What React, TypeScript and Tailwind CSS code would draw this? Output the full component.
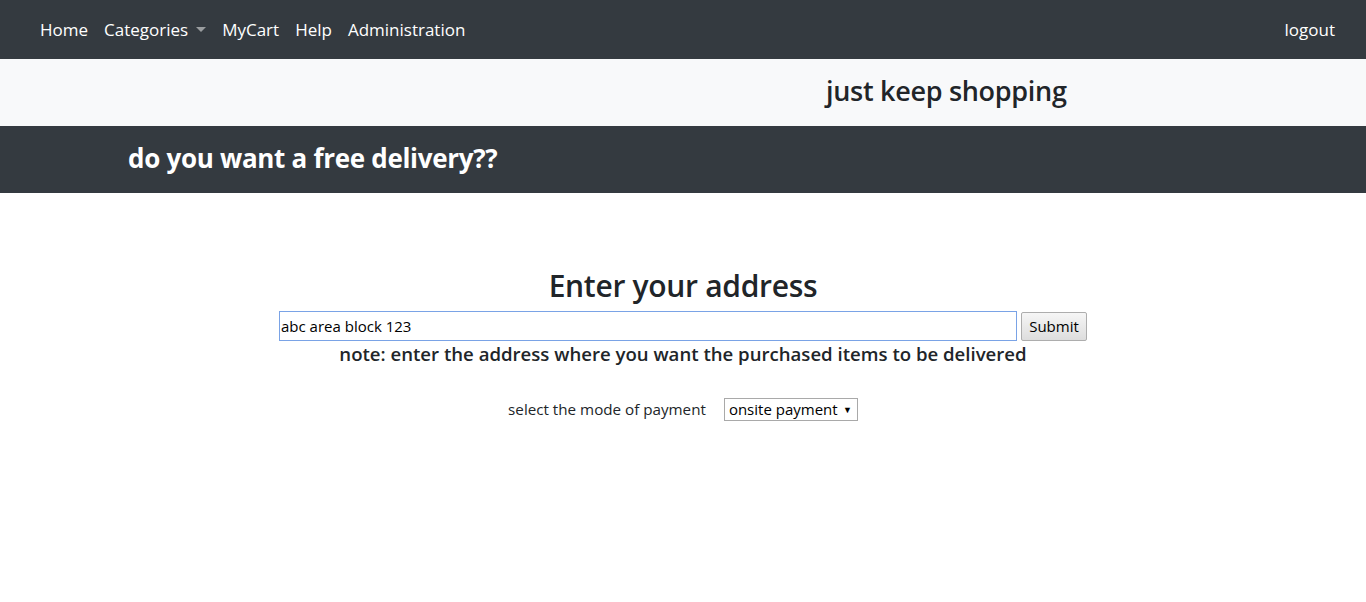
import React from 'react';

const font = { fontFamily: '"Open Sans", "Noto Sans", sans-serif' };

const NavLink: React.FC<{ label: string; caret?: boolean }> = ({ label, caret }) => (
  <a className="flex items-center px-2 py-2 text-white text-[17px] leading-6 cursor-pointer">
    {label}
    {caret && (
      <span className="ml-[8px] inline-block w-0 h-0 border-l-[5px] border-r-[5px] border-t-[5px] border-l-transparent border-r-transparent border-t-[#9a9da0]" />
    )}
  </a>
);

export default function App() {
  return (
    <div className="min-h-screen bg-white text-[#212529] font-['Open_Sans','Noto_Sans',sans-serif]">
      <nav className="h-[59px] bg-[#343a40] flex items-center justify-between pl-[32px] pr-[23px]">
        <div className="flex items-center">
          <NavLink label="Home" />
          <NavLink label="Categories" caret />
          <NavLink label="MyCart" />
          <NavLink label="Help" />
          <NavLink label="Administration" />
        </div>
        <NavLink label="logout" />
      </nav>

      <div className="h-[67px] bg-[#f8f9fa] flex items-center pl-[826px] pb-[4px]">
        <h2 className="text-[27px] font-semibold leading-none tracking-[-0.3px]">just keep shopping</h2>
      </div>

      <div className="h-[67px] bg-[#343a40] flex items-center pl-[128px] pb-[4px]">
        <h2 className="text-[26px] font-bold text-white leading-none tracking-[-0.3px]">do you want a free delivery??</h2>
      </div>

      <div className="flex flex-col items-center pt-[74px]">
        <h1 className="text-[30px] font-semibold leading-[38px] tracking-[-0.3px]">Enter your address</h1>
        <div className="flex items-center gap-[4px] mt-[6px]">
          <input
            defaultValue="abc area block 123"
            className="w-[738px] h-[30px] border border-[#7aa3e6] outline-none px-[1px] text-[15px] text-black"
            style={font}
          />
          <button className="h-[29px] w-[66px] border border-[#adadad] rounded-[2px] bg-gradient-to-b from-[#f6f6f6] to-[#dddddd] text-[15px] text-black">
            Submit
          </button>
        </div>
        <h5 className="text-[18.6px] font-semibold leading-[26px]">
          note: enter the address where you want the purchased items to be delivered
        </h5>
        <div className="flex items-center mt-[31px]">
          <span className="text-[15.2px] mr-[18px]">select the mode of payment</span>
          <div className="flex items-center justify-between w-[134px] h-[23px] border border-[#a9a9a9] pl-[4px] pr-[5px] text-[15px] text-black bg-white">
            <span>onsite payment</span>
            <span className="text-[9px]">▼</span>
          </div>
        </div>
      </div>
    </div>
  );
}
